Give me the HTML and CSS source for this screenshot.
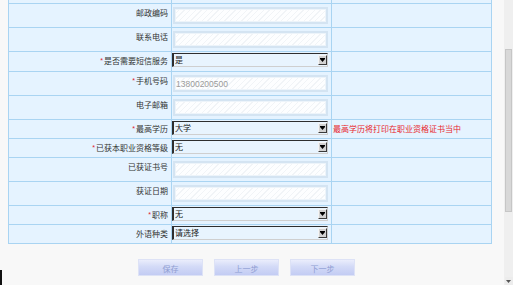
FILE: index.html
```html
<!DOCTYPE html>
<html lang="zh-CN">
<head>
<meta charset="utf-8">
<title>报名信息</title>
<link rel="stylesheet" href="styles.css">
</head>
<body>
<main class="page">
  <form class="form">
    <div class="row row-in">
      <div class="lbl"></div>
      <div class="fld"><input class="txt" type="text"></div>
      <div class="tip"></div>
    </div>
    <div class="row row-in">
      <label class="lbl">邮政编码</label>
      <div class="fld"><input class="txt" type="text"></div>
      <div class="tip"></div>
    </div>
    <div class="row row-in">
      <label class="lbl">联系电话</label>
      <div class="fld"><input class="txt" type="text"></div>
      <div class="tip"></div>
    </div>
    <div class="row row-sel tall">
      <label class="lbl"><span class="req">*</span>是否需要短信服务</label>
      <div class="fld"><div class="sel"><select><option>是</option><option>否</option></select><span class="arrow"><svg width="5" height="4" viewBox="0 0 5 4"><rect x="0" y="0" width="5" height="1" fill="#000"/><polygon points="0,1 5,1 2.5,4" fill="#000"/></svg></span></div></div>
      <div class="tip"></div>
    </div>
    <div class="row row-in">
      <label class="lbl"><span class="req">*</span>手机号码</label>
      <div class="fld"><input class="txt" type="text" placeholder="13800200500"></div>
      <div class="tip"></div>
    </div>
    <div class="row row-in">
      <label class="lbl">电子邮箱</label>
      <div class="fld"><input class="txt" type="text"></div>
      <div class="tip"></div>
    </div>
    <div class="row row-sel">
      <label class="lbl"><span class="req">*</span>最高学历</label>
      <div class="fld"><div class="sel"><select><option>大学</option></select><span class="arrow"><svg width="5" height="4" viewBox="0 0 5 4"><rect x="0" y="0" width="5" height="1" fill="#000"/><polygon points="0,1 5,1 2.5,4" fill="#000"/></svg></span></div></div>
      <div class="tip">最高学历将打印在职业资格证书当中</div>
    </div>
    <div class="row row-sel">
      <label class="lbl"><span class="req">*</span>已获本职业资格等级</label>
      <div class="fld"><div class="sel"><select><option>无</option></select><span class="arrow"><svg width="5" height="4" viewBox="0 0 5 4"><rect x="0" y="0" width="5" height="1" fill="#000"/><polygon points="0,1 5,1 2.5,4" fill="#000"/></svg></span></div></div>
      <div class="tip"></div>
    </div>
    <div class="row row-in">
      <label class="lbl">已获证书号</label>
      <div class="fld"><input class="txt" type="text"></div>
      <div class="tip"></div>
    </div>
    <div class="row row-in">
      <label class="lbl">获证日期</label>
      <div class="fld"><input class="txt" type="text"></div>
      <div class="tip"></div>
    </div>
    <div class="row row-sel">
      <label class="lbl"><span class="req">*</span>职称</label>
      <div class="fld"><div class="sel"><select><option>无</option></select><span class="arrow"><svg width="5" height="4" viewBox="0 0 5 4"><rect x="0" y="0" width="5" height="1" fill="#000"/><polygon points="0,1 5,1 2.5,4" fill="#000"/></svg></span></div></div>
      <div class="tip"></div>
    </div>
    <div class="row row-sel">
      <label class="lbl">外语种类</label>
      <div class="fld"><div class="sel"><select><option>请选择</option></select><span class="arrow"><svg width="5" height="4" viewBox="0 0 5 4"><rect x="0" y="0" width="5" height="1" fill="#000"/><polygon points="0,1 5,1 2.5,4" fill="#000"/></svg></span></div></div>
      <div class="tip"></div>
    </div>
  </form>
  <div class="actions">
    <button class="btn" type="button">保存</button>
    <button class="btn" type="button">上一步</button>
    <button class="btn" type="button">下一步</button>
  </div>
  <div class="edge"></div>
</main>
<div class="vscroll">
  <div class="thumb"></div>
  <div class="down"><svg width="5" height="3" viewBox="0 0 5 3"><polygon points="0,0 5,0 2.5,3" fill="#555"/></svg></div>
</div>
</body>
</html>
```

FILE: styles.css
```css
html, body {
  margin: 0;
  padding: 0;
}
body {
  display: flex;
  height: 285px;
  overflow: hidden;
  background: #f8f8f8;
  font-family: "Noto Sans CJK SC", "Noto Sans", sans-serif;
  font-size: 8px;
  color: #333;
}
.page {
  width: 504px;
  flex: none;
  padding-left: 8px;
  box-sizing: border-box;
}
.form {
  width: 484px;
  box-sizing: border-box;
  margin: -20px 0 0 0;
  border-left: 1px solid #a9d4f2;
  border-right: 1px solid #a9d4f2;
  background: #e5f3ff;
}
.row {
  display: grid;
  grid-template-columns: 163px 160px 1fr;
  align-items: stretch;
  border-bottom: 1px solid #a9d4f2;
}
.lbl {
  border-right: 1px solid #a9d4f2;
  text-align: right;
  padding: 3px 3px 0 0;
  line-height: 12px;
  white-space: nowrap;
}
.req {
  color: #e0202a;
  font-family: "Liberation Sans", sans-serif;
  font-size: 7px;
  margin-right: 1px;
  vertical-align: 1px;
}
.fld {
  border-right: 1px solid #a9d4f2;
}
.tip {
  padding: 3px 0 0 1px;
  line-height: 12px;
  color: #e8242c;
  white-space: nowrap;
}
.row-in .fld {
  padding: 3px 0 3px 1px;
}
.row-sel .fld {
  padding: 1px 0 3px 0;
}
.row-sel.tall .fld {
  padding: 1px 0 4px 0;
}
.txt {
  display: block;
  width: 155px;
  height: 17px;
  box-sizing: border-box;
  margin: 0;
  padding: 0 1px;
  border: 2px solid #d4e4f2;
  outline: 1px solid #edf4fa;
  outline-offset: -3px;
  background: repeating-linear-gradient(135deg, #fdfeff 0, #fdfeff 3px, #f1f4f7 3px, #f1f4f7 4px);
  font-family: "Liberation Sans", sans-serif;
  font-size: 8.5px;
  color: #333;
}
.txt::placeholder {
  color: #9a9a9a;
}
.sel {
  position: relative;
  width: 156px;
  height: 14px;
}
.sel select {
  display: block;
  width: 156px;
  height: 14px;
  box-sizing: border-box;
  margin: 0;
  padding: 0 0 0 1px;
  appearance: none;
  -webkit-appearance: none;
  border-style: solid;
  border-width: 1px 1px 1px 2px;
  border-color: #2e2e2e #cfcfcf #cfcfcf #2e2e2e;
  border-radius: 0;
  background: #e8f4fe;
  font-family: "Noto Sans CJK SC", sans-serif;
  font-size: 8px;
  line-height: 12px;
  color: #222;
}
.arrow {
  position: absolute;
  right: 1px;
  top: 2px;
  width: 9px;
  height: 10px;
  box-sizing: border-box;
  background: #d2d2d2;
  border-style: solid;
  border-width: 1px;
  border-color: #f4f4f4 #3a3a3a #3a3a3a #f4f4f4;
  display: flex;
  align-items: center;
  justify-content: center;
}
.arrow svg {
  display: block;
}
.actions {
  display: flex;
  gap: 11px;
  margin-top: 15px;
  padding-left: 130px;
}
.btn {
  width: 65px;
  height: 17px;
  margin: 0;
  padding: 2px 0 0 0;
  border: 1px solid #dde2f6;
  background: linear-gradient(to bottom, #eaedfc 0%, #d3daf7 45%, #c3ccf3 100%);
  font-family: "Noto Sans CJK SC", sans-serif;
  font-size: 8px;
  line-height: 12px;
  color: #8e9dd2;
}
.edge {
  width: 2px;
  height: 15px;
  margin: -6px 0 0 -8px;
  background: #111;
}
.vscroll {
  width: 9px;
  flex: none;
  margin-left: auto;
  background: #efefef;
  display: flex;
  flex-direction: column;
  align-items: center;
}
.thumb {
  width: 7px;
  height: 163px;
  margin-top: 49px;
  box-sizing: border-box;
  background: #d8d8d8;
  border: 1px solid #c6c6c6;
}
.down {
  margin-top: auto;
  width: 8px;
  height: 8px;
  display: flex;
  align-items: center;
  justify-content: center;
  background: #ececec;
}
.down svg {
  display: block;
}
```
